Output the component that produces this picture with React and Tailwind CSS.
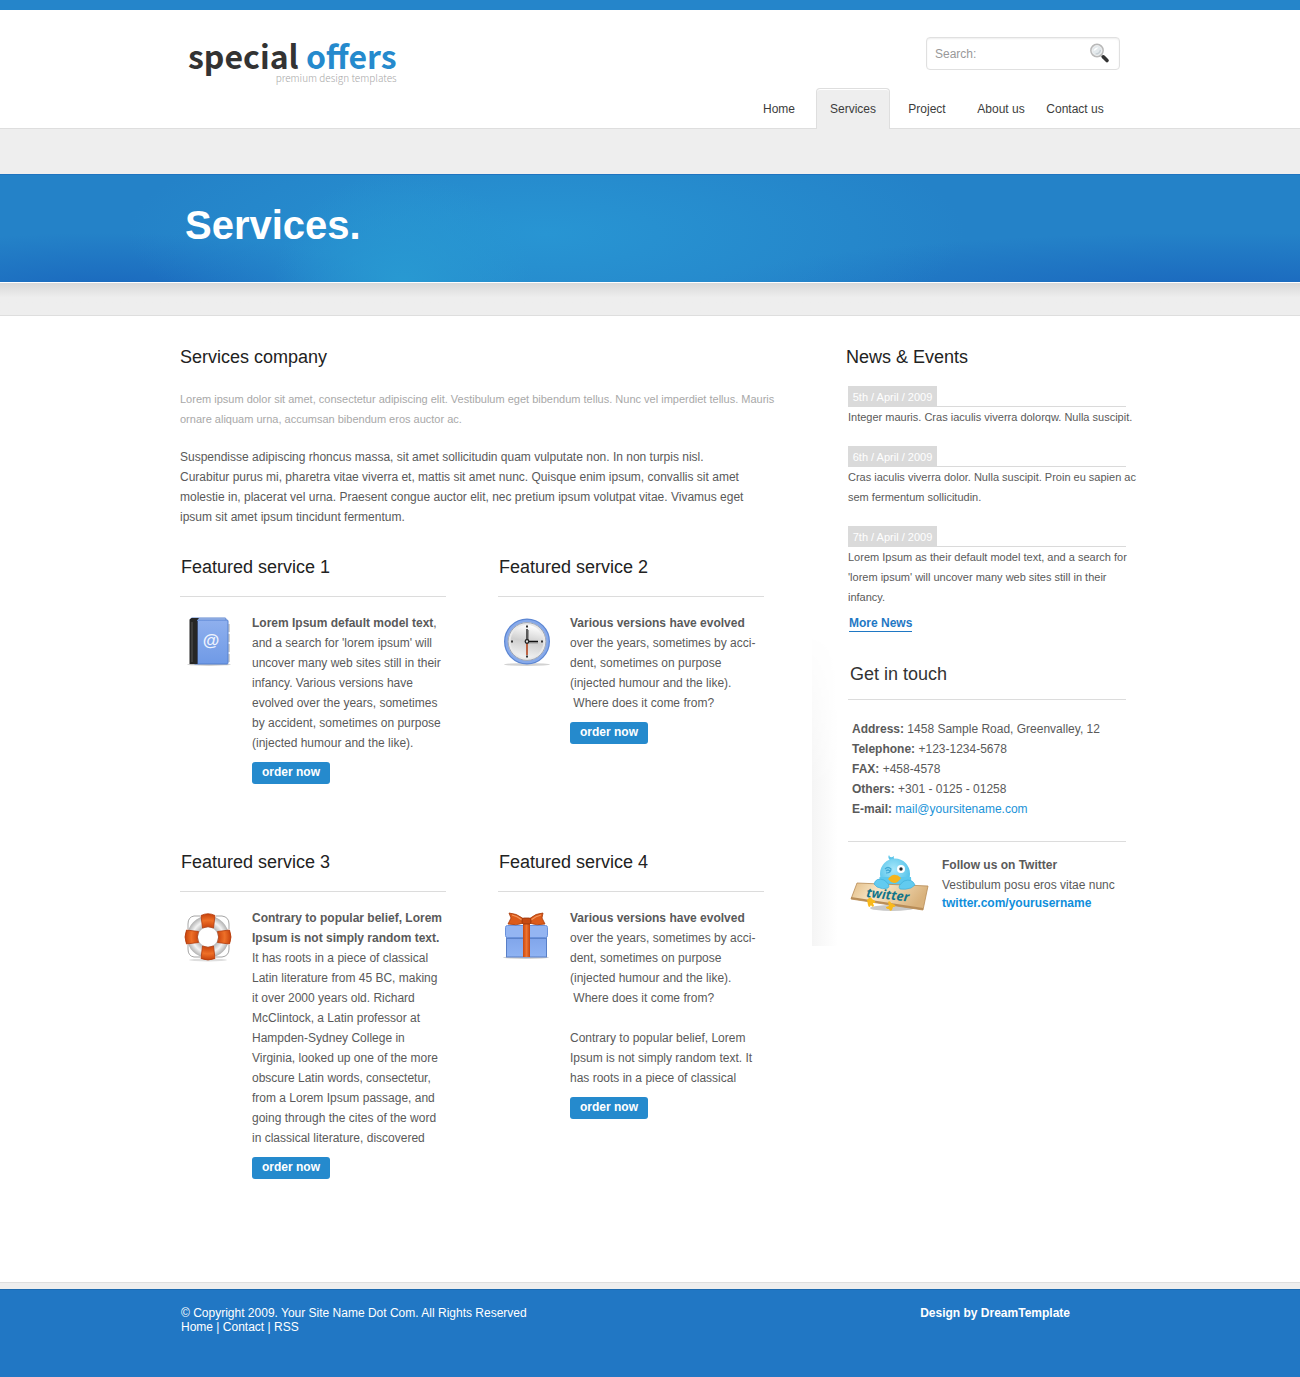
import React from "react";

function BookIcon() {
  return (
    <svg viewBox="0 0 48 52" className="mt-[3px] h-[52px] w-12 shrink-0" aria-hidden="true">
      <defs>
        <linearGradient id="bookCover" x1="0" y1="0" x2="0" y2="1">
          <stop offset="0" stopColor="#8fb0ee" />
          <stop offset="1" stopColor="#6f9ae6" />
        </linearGradient>
      </defs>
      <ellipse cx="25" cy="48.5" rx="22" ry="1.2" fill="#c4c4c4" />
      <g fill="#d0d0d0">
        <rect x="40" y="8" width="6" height="8" />
        <rect x="40" y="18" width="6" height="8" />
        <rect x="40" y="28" width="6" height="8" />
        <rect x="40" y="38" width="6" height="8" />
      </g>
      <rect x="7" y="2" width="35" height="8" rx="1" fill="#b9cdf3" stroke="#5f86cf" />
      <rect x="10" y="4" width="34" height="44" rx="1" fill="url(#bookCover)" stroke="#5580cf" />
      <path d="M5.500 3.500 L7.500 2 H15 L13 4.500 V48 H5.500Z" fill="#262626" />
      <path d="M8 6 V46" stroke="#555" strokeWidth="1" />
      <path d="M13.500 5 V48" stroke="#3b4c70" strokeWidth="1" />
      <text x="27" y="30" textAnchor="middle" fontFamily="Liberation Sans" fontSize="17" fontWeight="700" fill="#eef3fd">@</text>
    </svg>
  );
}

function ClockIcon() {
  return (
    <svg viewBox="0 0 48 52" className="mt-[3px] h-[52px] w-12 shrink-0" aria-hidden="true">
      <defs>
        <linearGradient id="clockFace" x1="0.600" y1="0" x2="0.400" y2="1">
          <stop offset="0" stopColor="#ffffff" />
          <stop offset="0.500" stopColor="#cfcfcf" />
          <stop offset="1" stopColor="#f3f3f3" />
        </linearGradient>
      </defs>
      <ellipse cx="25" cy="48.500" rx="23" ry="1.400" fill="#d2d2d2" />
      <g transform="translate(1 0)">
        <circle cx="24" cy="25.500" r="22" fill="#e4e4e4" stroke="#5c86d2" strokeWidth="2" />
        <circle cx="24" cy="25.500" r="20.500" fill="none" stroke="#86a9ea" strokeWidth="2.500" />
        <circle cx="24" cy="25.500" r="18.900" fill="#e9e9e9" stroke="#8c96a8" strokeWidth="0.800" />
        <circle cx="24" cy="25.500" r="16.500" fill="url(#clockFace)" />
        <g fill="#333">
          <rect x="23" y="9.500" width="2" height="2" />
          <rect x="23" y="39.500" width="2" height="2" />
          <rect x="8" y="24.500" width="2" height="2" />
          <rect x="38" y="24.500" width="2" height="2" />
        </g>
        <path d="M25.500 14 V27 H35" stroke="#9b9b9b" strokeWidth="1" fill="none" />
        <path d="M24 25.500 V39" stroke="#b5431b" strokeWidth="1.600" />
        <path d="M24 13 V25.500 H35" stroke="#111" strokeWidth="1.300" fill="none" />
        <circle cx="24" cy="25.500" r="1.800" fill="#ddd" stroke="#222" strokeWidth="1.300" />
      </g>
    </svg>
  );
}

function LifebuoyIcon() {
  return (
    <svg viewBox="0 0 48 52" className="mt-[3px] h-[52px] w-12 shrink-0" aria-hidden="true">
      <defs>
        <radialGradient id="buoyRing" gradientUnits="userSpaceOnUse" cx="24" cy="26" r="22">
          <stop offset="0.450" stopColor="#b5b5b5" />
          <stop offset="0.700" stopColor="#f3f3f3" />
          <stop offset="1" stopColor="#a5a5a5" />
        </radialGradient>
        <radialGradient id="buoyBand" gradientUnits="userSpaceOnUse" cx="24" cy="26" r="24">
          <stop offset="0.400" stopColor="#c9430c" />
          <stop offset="0.700" stopColor="#ee7028" />
          <stop offset="1" stopColor="#c03c08" />
        </radialGradient>
      </defs>
      <ellipse cx="24" cy="49" rx="19" ry="1.500" fill="#dedede" />
      <path d="M16 5 H10 Q4 6 4 13 V18 M32 5 H38 Q45 6 45 13 V18 M16 46 H10 Q4 45 4 38 V34 M32 46 H38 Q45 45 45 38 V34" fill="none" stroke="#a5a5a5" strokeWidth="1" />
      <circle cx="24" cy="26" r="15.500" fill="none" stroke="url(#buoyRing)" strokeWidth="11" />
      <g fill="url(#buoyBand)" stroke="#b33a0a" strokeWidth="0.800">
        <path d="M17 4.500 Q24 1 31 4.500 L29.500 17 Q24 14.500 18.500 17Z" />
        <path d="M17 47.500 Q24 50.500 31 47.500 L29.500 35 Q24 37.500 18.500 35Z" />
        <path d="M2.500 19 Q-.5 26 2.500 33 L14.500 31.500 Q12 26 14.500 20.500Z" />
        <path d="M45.500 19 Q48.500 26 45.500 33 L33.500 31.500 Q36 26 33.500 20.500Z" />
      </g>
    </svg>
  );
}

function GiftIcon() {
  return (
    <svg viewBox="0 0 48 52" className="mt-[3px] h-[52px] w-12 shrink-0" aria-hidden="true">
      <defs>
        <linearGradient id="giftBox" x1="0" y1="0" x2="0" y2="1">
          <stop offset="0" stopColor="#7fa4ea" />
          <stop offset="1" stopColor="#8fb3f3" />
        </linearGradient>
        <linearGradient id="ribbon" x1="0" y1="0" x2="1" y2="0">
          <stop offset="0" stopColor="#c9480f" />
          <stop offset="0.500" stopColor="#ee7430" />
          <stop offset="1" stopColor="#c4440e" />
        </linearGradient>
      </defs>
      <ellipse cx="24" cy="46.500" rx="23" ry="1.400" fill="#cfcfcf" />
      <rect x="4.500" y="25" width="40" height="21" fill="url(#giftBox)" stroke="#587fc7" />
      <rect x="3.500" y="14.500" width="42" height="12" rx="2" fill="#94b5f2" stroke="#6a92dc" />
      <path d="M4 27.500 H45" stroke="#5b82ca" />
      <rect x="21" y="13" width="7" height="33" fill="url(#ribbon)" />
      <path d="M22 8 Q14 2 7 2 L9 7 L6 13 Q14 15 22 12Z" fill="#dc5b1a" stroke="#a63a0a" strokeWidth="0.800" />
      <path d="M27 8 Q34 2 41 2 L40 7 L43 13 Q35 15 27 12Z" fill="#dc5b1a" stroke="#a63a0a" strokeWidth="0.800" />
      <path d="M10 4 Q15 5 20 9 M39 4 Q34 5 29 9" stroke="#f4955c" strokeWidth="1.200" fill="none" />
      <rect x="20" y="7" width="9" height="6" rx="2" fill="#c64a12" stroke="#96340a" strokeWidth="0.800" />
    </svg>
  );
}

function MagnifierIcon() {
  return (
    <svg viewBox="0 0 22 22" className="h-[22px] w-[22px]" aria-hidden="true">
      <path d="M12.500 12.500 L15 15" stroke="#888" strokeWidth="2.500" />
      <path d="M14.500 14 L18 17.500" stroke="#333" strokeWidth="3.600" strokeLinecap="round" />
      <circle cx="8" cy="7.500" r="6" fill="#e3e9ec" stroke="#b8b8b8" strokeWidth="1.800" />
      <circle cx="8" cy="7.500" r="5" fill="none" stroke="#f4f4f4" strokeWidth="0.800" />
      <path d="M4.500 8 Q5.500 4 9.500 4.500 Q7.500 7 4.500 8Z" fill="#fff" />
      <path d="M6.500 11 Q10.500 11 11.500 7" stroke="#c6ced3" strokeWidth="1.200" fill="none" />
    </svg>
  );
}

function TwitterBird() {
  return (
    <svg viewBox="0 0 80 58" className="h-[58px] w-20 shrink-0" role="img" aria-label="Twitter">
      <defs>
        <radialGradient id="birdBody" cx="0.450" cy="0.350" r="0.650">
          <stop offset="0" stopColor="#a5e6fa" />
          <stop offset="1" stopColor="#4cbfe8" />
        </radialGradient>
        <linearGradient id="plank" x1="0" y1="0" x2="1" y2="0.300">
          <stop offset="0" stopColor="#e3bd86" />
          <stop offset="0.400" stopColor="#f8e6c6" />
          <stop offset="1" stopColor="#d9b27c" />
        </linearGradient>
      </defs>
      <ellipse cx="42" cy="53" rx="22" ry="3" fill="#c9c9c9" />
      <path d="M41 6 Q37 3 39 0 Q40 4 44 1 Q43 4 46 6Z" fill="#5cc5ea" />
      <ellipse cx="45" cy="19" rx="15" ry="15.500" fill="url(#birdBody)" />
      <path d="M29.500 22 Q28 40 46 40 Q63 40 61 22Z" fill="#5cc8ee" />
      <path d="M35 14 Q38 11 41 14 Q41 18 36 18 M36 16 Q38 14 40 16" fill="none" stroke="#3fa9d5" strokeWidth="1.200" />
      <circle cx="51" cy="14" r="4" fill="#fff" />
      <circle cx="51" cy="14" r="1.700" fill="#1f2a30" />
      <path d="M38 24 Q44 16 51 23 Q48 28 44 28 Q40 27 38 24Z" fill="#f5b41c" />
      <path d="M7 28 L78 31 L73 55 L1 44Z" fill="url(#plank)" stroke="#b78b55" strokeWidth="0.800" />
      <path d="M1 44 L73 55 L73 53 L1 42Z" fill="#b98d58" />
      <path d="M24 29 Q26 22 34 25 Q41 30 38 33 Q33 35 27 32 Z" fill="#62cbf0" stroke="#3fafdb" strokeWidth="0.700" />
      <path d="M65 30 Q62 23 54 26 Q47 31 50 34 Q55 35 61 33Z" fill="#62cbf0" stroke="#3fafdb" strokeWidth="0.700" />
      <text x="16" y="42" transform="rotate(6 16 42)" fontFamily="Open Sans, sans-serif" fontStyle="italic" fontWeight="700" fontSize="13" fill="#127489">twitter</text>
      <g fill="#f9b91b">
        <path d="M19 43 Q21 41 22 44 L25 46 Q26 48 23 48 L24 51 Q22 53 21 50 Q19 54 18 50 L17 45Z" />
        <path d="M38 47 Q40 45 41 48 L45 50 Q46 52 43 52 L42 55 Q40 57 39 54 Q36 54 36 52 L39 51Z" />
      </g>
    </svg>
  );
}

const NAV = ["Home", "Services", "Project", "About us", "Contact us"];

const SERVICES = [
  {
    title: "Featured service 1",
    icon: <BookIcon />,
    body: (
      <>
        <b>Lorem Ipsum default model text</b>,<br />
        and a search for 'lorem ipsum' will<br />
        uncover many web sites still in their<br />
        infancy. Various versions have<br />
        evolved over the years, sometimes<br />
        by accident, sometimes on purpose<br />
        (injected humour and the like).
      </>
    ),
  },
  {
    title: "Featured service 2",
    icon: <ClockIcon />,
    body: (
      <>
        <b>Various versions have evolved</b><br />
        over the years, sometimes by acci-<br />
        dent, sometimes on purpose<br />
        (injected humour and the like).<br />
        &nbsp;Where does it come from?
      </>
    ),
  },
  {
    title: "Featured service 3",
    icon: <LifebuoyIcon />,
    body: (
      <>
        <b>
          Contrary to popular belief, Lorem<br />
          Ipsum is not simply random text.
        </b><br />
        It has roots in a piece of classical<br />
        Latin literature from 45 BC, making<br />
        it over 2000 years old. Richard<br />
        McClintock, a Latin professor at<br />
        Hampden-Sydney College in<br />
        Virginia, looked up one of the more<br />
        obscure Latin words, consectetur,<br />
        from a Lorem Ipsum passage, and<br />
        going through the cites of the word<br />
        in classical literature, discovered
      </>
    ),
  },
  {
    title: "Featured service 4",
    icon: <GiftIcon />,
    body: (
      <>
        <b>Various versions have evolved</b><br />
        over the years, sometimes by acci-<br />
        dent, sometimes on purpose<br />
        (injected humour and the like).<br />
        &nbsp;Where does it come from?<br />
        <br />
        Contrary to popular belief, Lorem<br />
        Ipsum is not simply random text. It<br />
        has roots in a piece of classical
      </>
    ),
  },
];

const NEWS = [
  { date: "5th / April / 2009", body: <>Integer mauris. Cras iaculis viverra dolorqw. Nulla suscipit.</> },
  {
    date: "6th / April / 2009",
    body: <>Cras iaculis viverra dolor. Nulla suscipit. Proin eu sapien ac<br />sem fermentum sollicitudin.</>,
  },
  {
    date: "7th / April / 2009",
    body: <>Lorem Ipsum as their default model text, and a search for<br />'lorem ipsum' will uncover many web sites still in their<br />infancy.</>,
  },
];

const CONTACT = [
  ["Address:", "1458 Sample Road, Greenvalley, 12"],
  ["Telephone:", "+123-1234-5678"],
  ["FAX:", "+458-4578"],
  ["Others:", "+301 - 0125 - 01258"],
];

function Header() {
  return (
    <header className="border-t-[10px] border-b border-t-[#2585ca] border-b-[#dedede] bg-white">
      <div className="mx-auto flex h-[118px] max-w-[960px] justify-between pr-[10px] pl-[18px]">
        <a href="#" className="mt-7 flex flex-col items-end self-start font-['Noto_Sans_CJK_SC',sans-serif]">
          <span className="text-[32px] leading-[34px] font-bold whitespace-nowrap text-[#333]">
            special <span className="text-[#258acd]">offers</span>
          </span>
          <span className="text-[10px] leading-3 font-light text-[#a8a8a8]">premium design templates</span>
        </a>
        <div className="flex flex-col items-end justify-between pt-[27px]">
          <form className="flex h-[33px] w-[194px] items-center rounded-sm border border-[#e0e0e0] bg-white pr-2 pl-2 shadow-[inset_0_1px_2px_#eee]">
            <input
              type="text"
              aria-label="Search"
              placeholder="Search:"
              className="min-w-0 flex-1 bg-transparent text-xs outline-none placeholder:text-[#999]"
            />
            <button type="button" aria-label="Search">
              <MagnifierIcon />
            </button>
          </form>
          <nav className="-mb-px pr-2">
            <ul className="flex text-xs text-[#3c3c3c]">
              {NAV.map((item) => (
                <li key={item} className="w-[74px]">
                  <a
                    href="#"
                    className={
                      item === "Services"
                        ? "block h-[41px] rounded-t-[4px] border border-b-0 border-[#dedede] bg-[#eee] text-center leading-10 shadow-[inset_0_1px_0_#fff]"
                        : "block h-[41px] text-center leading-[42px]"
                    }
                  >
                    {item}
                  </a>
                </li>
              ))}
            </ul>
          </nav>
        </div>
      </div>
    </header>
  );
}

function Hero() {
  return (
    <section className="border-b border-[#dedede] bg-[#eee] pt-[45px]">
      <div className="border-t border-b border-t-[#1f74c0] border-b-white bg-[radial-gradient(ellipse_130px_110px_at_31%_100%,#2899d2_0%,transparent_100%),radial-gradient(ellipse_420px_120px_at_42%_55%,#2895d3_0%,transparent_100%),radial-gradient(ellipse_300px_60px_at_8%_110%,#1a67bd_0%,transparent_100%),radial-gradient(ellipse_520px_60px_at_94%_110%,#1a66bd_0%,transparent_100%)] bg-[#2482c8]">
        <div className="mx-auto max-w-[960px] pl-[15px]">
          <h1 className="pt-[26px] pb-[32px] text-[40px] leading-[49px] font-bold text-white">Services.</h1>
        </div>
      </div>
      <div className="h-[32px] bg-linear-to-b from-[#d8d8d8] to-[#eee] to-45%" />
    </section>
  );
}

function ServiceCard({ title, icon, body }) {
  return (
    <article>
      <h3 className="border-b border-[#dcdcdc] pb-[19px] pl-px text-lg leading-5 text-[#222]">{title}</h3>
      <div className="flex gap-[20px] pt-4 pl-1">
        {icon}
        <div>
          <p className="text-xs leading-5 whitespace-nowrap">{body}</p>
          <button
            type="button"
            className="mt-[9px] block h-[22px] w-[78px] rounded-[3px] bg-[#258acd] pb-0.5 text-xs leading-5 font-bold text-white"
          >
            order now
          </button>
        </div>
      </div>
    </article>
  );
}

function Sidebar() {
  return (
    <aside className="w-[278px] shrink-0 text-[11px] leading-5">
      <h2 className="-ml-0.5 text-lg leading-5 text-[#222]">News &amp; Events</h2>
      <div className="mt-[19px] flex flex-col gap-[19px]">
        {NEWS.map((item) => (
          <article key={item.date}>
            <div className="flex border-b border-[#dadada]">
              <time className="h-5 w-[89px] bg-[#dadada] text-center leading-[22px] whitespace-nowrap text-white">{item.date}</time>
            </div>
            <p className="whitespace-nowrap">{item.body}</p>
          </article>
        ))}
      </div>
      <a href="#" className="mt-2 ml-px inline-block border-b border-[#1f78c4] text-xs font-bold text-[#1f78c4]">
        <span className="block leading-4">More News</span>
      </a>
      <h2 className="mt-[31px] border-b border-[#dcdcdc] pb-[15px] pl-0.5 text-lg leading-5 text-[#333]">Get in touch</h2>
      <address className="border-b border-[#dcdcdc] pt-[19px] pb-[22px] pl-1 text-xs leading-5 not-italic">
        {CONTACT.map(([label, value]) => (
          <p key={label}>
            <b>{label}</b> {value}
          </p>
        ))}
        <p>
          <b>E-mail:</b>{" "}
          <a href="mailto:mail@yoursitename.com" className="text-[#1b93d8]">mail@yoursitename.com</a>
        </p>
      </address>
      <div className="flex gap-3 pt-[13px] pl-0.5 text-xs whitespace-nowrap">
        <TwitterBird />
        <div>
          <p className="leading-5 font-bold">Follow us on Twitter</p>
          <p className="leading-5">Vestibulum posu eros vitae nunc</p>
          <a href="#" className="block leading-4 font-bold text-[#0f8edb]">twitter.com/yourusername</a>
        </div>
      </div>
    </aside>
  );
}

export default function App() {
  return (
    <div className="bg-white font-['Liberation_Sans',Arial,sans-serif] text-[#5a5a5a]">
      <Header />
      <Hero />
      <main className="mx-auto flex max-w-[960px] pt-[31px] pr-1 pb-[103px] pl-[10px]">
        <div className="min-w-0 flex-1">
          <h2 className="text-lg leading-5 text-[#222]">Services company</h2>
          <p className="mt-[22px] text-[11px] leading-5 whitespace-nowrap text-[#a8a8a8]">
            Lorem ipsum dolor sit amet, consectetur adipiscing elit. Vestibulum eget bibendum tellus. Nunc vel imperdiet tellus. Mauris<br />
            ornare aliquam urna, accumsan bibendum eros auctor ac.
          </p>
          <p className="mt-[18px] text-xs leading-5 whitespace-nowrap">
            Suspendisse adipiscing rhoncus massa, sit amet sollicitudin quam vulputate non. In non turpis nisl.<br />
            Curabitur purus mi, pharetra vitae viverra et, mattis sit amet nunc. Quisque enim ipsum, convallis sit amet<br />
            molestie in, placerat vel urna. Praesent congue auctor elit, nec pretium ipsum volutpat vitae. Vivamus eget<br />
            ipsum sit amet ipsum tincidunt fermentum.
          </p>
          <div className="mt-[30px] grid grid-cols-2 gap-x-[52px] gap-y-[68px]">
            {SERVICES.map((s) => (
              <ServiceCard key={s.title} {...s} />
            ))}
          </div>
        </div>
        <div className="mt-[284px] mr-[10px] ml-12 h-[315px] w-[26px] bg-linear-to-r from-[#f5f5f5] to-white mask-t-from-50%" />
        <Sidebar />
      </main>
      <footer className="border-t border-[#dedede] bg-[#eee] pt-1.5 text-xs leading-[14px] text-white">
        <div className="border-t border-[#1c69ae] bg-[#2177c4] pt-4 pb-[43px]">
          <div className="mx-auto flex max-w-[960px] justify-between pr-[60px] pl-[11px]">
            <div>
              <p>© Copyright 2009. Your Site Name Dot Com. All Rights Reserved</p>
              <p>
                <a href="#">Home</a> | <a href="#">Contact</a> | <a href="#">RSS</a>
              </p>
            </div>
            <a href="#" className="font-bold">Design by DreamTemplate</a>
          </div>
        </div>
      </footer>
    </div>
  );
}
